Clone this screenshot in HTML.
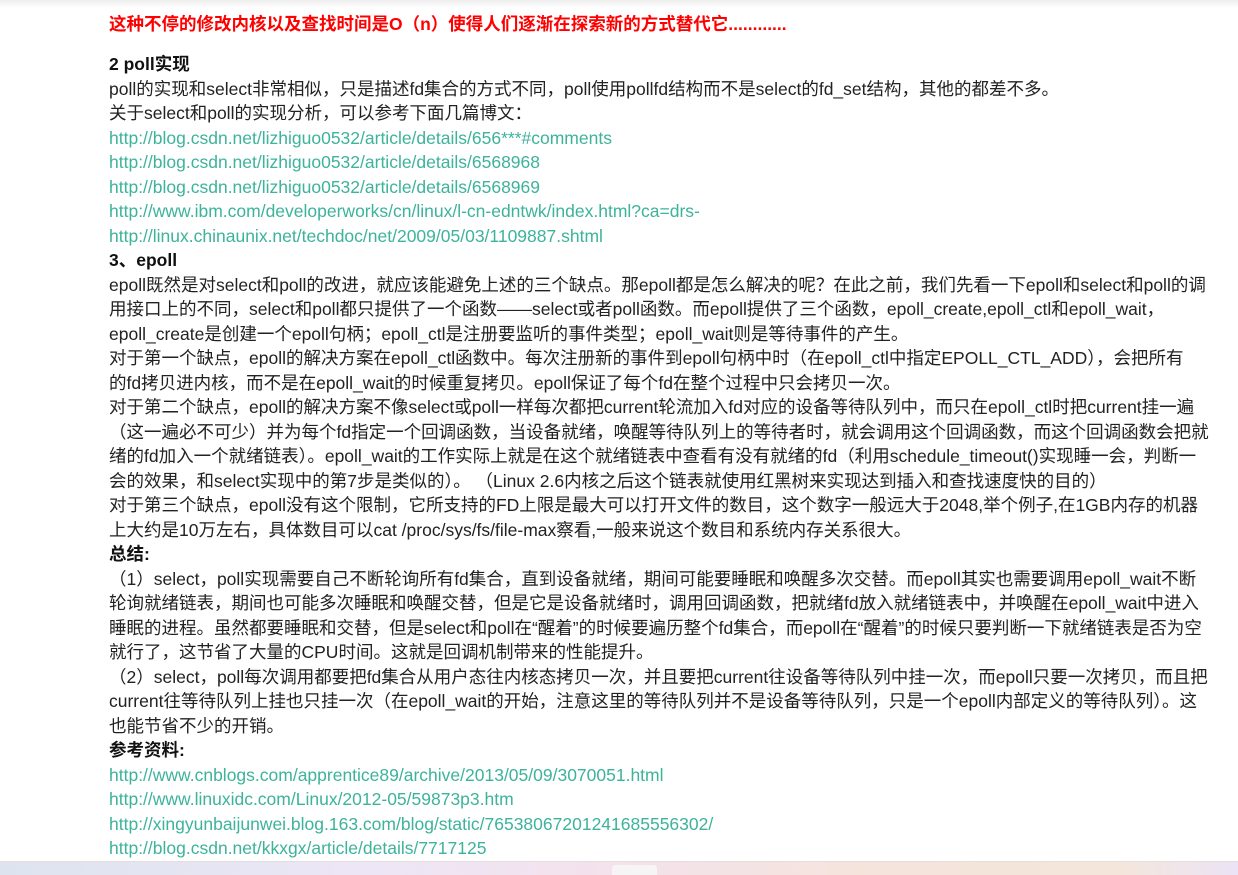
<!DOCTYPE html>
<html><head><meta charset="utf-8">
<style>
html,body{margin:0;padding:0;background:#fff;width:1238px;height:875px;overflow:hidden;}
body{font-family:"Liberation Sans","Noto Sans CJK SC",sans-serif;font-size:17.5px;color:#222;position:relative;}
.top{position:absolute;left:0;top:0;width:1238px;height:8px;background:linear-gradient(#eee,#fff);}
.red{position:absolute;left:109px;top:12px;color:#f00;font-weight:bold;line-height:24px;white-space:nowrap;}
.c{position:absolute;left:109px;top:52px;line-height:24.5px;white-space:nowrap;}
.c div{height:24.5px;}
b{font-weight:bold;color:#111;}
.l{color:#3db39b;}
.bar{position:absolute;left:0;top:861px;width:1238px;height:14px;border-top:1px solid #e6dcdc;background:linear-gradient(90deg,#dde4ef,#ede6f6 30%,#f4e2ec 50%,#f5e4dc 70%,#f4e6da 90%,#ece4f6);}
.tab{position:absolute;left:612px;top:3px;width:45px;height:12px;background:#f6f4f4;border-radius:3px 3px 0 0;}
</style></head><body>
<div class="top"></div>
<div class="red">这种不停的修改内核以及查找时间是O（n）使得人们逐渐在探索新的方式替代它............</div>
<div class="c">
<div><b>2 poll实现</b></div>
<div>poll的实现和select非常相似，只是描述fd集合的方式不同，poll使用pollfd结构而不是select的fd_set结构，其他的都差不多。</div>
<div>关于select和poll的实现分析，可以参考下面几篇博文：</div>
<div class="l">http://blog.csdn.net/lizhiguo0532/article/details/656***#comments</div>
<div class="l">http://blog.csdn.net/lizhiguo0532/article/details/6568968</div>
<div class="l">http://blog.csdn.net/lizhiguo0532/article/details/6568969</div>
<div class="l">http://www.ibm.com/developerworks/cn/linux/l-cn-edntwk/index.html?ca=drs-</div>
<div class="l">http://linux.chinaunix.net/techdoc/net/2009/05/03/1109887.shtml</div>
<div><b>3、epoll</b></div>
<div>epoll既然是对select和poll的改进，就应该能避免上述的三个缺点。那epoll都是怎么解决的呢？在此之前，我们先看一下epoll和select和poll的调</div>
<div>用接口上的不同，select和poll都只提供了一个函数——select或者poll函数。而epoll提供了三个函数，epoll_create,epoll_ctl和epoll_wait，</div>
<div>epoll_create是创建一个epoll句柄；epoll_ctl是注册要监听的事件类型；epoll_wait则是等待事件的产生。</div>
<div>对于第一个缺点，epoll的解决方案在epoll_ctl函数中。每次注册新的事件到epoll句柄中时（在epoll_ctl中指定EPOLL_CTL_ADD），会把所有</div>
<div>的fd拷贝进内核，而不是在epoll_wait的时候重复拷贝。epoll保证了每个fd在整个过程中只会拷贝一次。</div>
<div>对于第二个缺点，epoll的解决方案不像select或poll一样每次都把current轮流加入fd对应的设备等待队列中，而只在epoll_ctl时把current挂一遍</div>
<div>（这一遍必不可少）并为每个fd指定一个回调函数，当设备就绪，唤醒等待队列上的等待者时，就会调用这个回调函数，而这个回调函数会把就</div>
<div>绪的fd加入一个就绪链表）。epoll_wait的工作实际上就是在这个就绪链表中查看有没有就绪的fd（利用schedule_timeout()实现睡一会，判断一</div>
<div>会的效果，和select实现中的第7步是类似的）。 （Linux 2.6内核之后这个链表就使用红黑树来实现达到插入和查找速度快的目的）</div>
<div>对于第三个缺点，epoll没有这个限制，它所支持的FD上限是最大可以打开文件的数目，这个数字一般远大于2048,举个例子,在1GB内存的机器</div>
<div>上大约是10万左右，具体数目可以cat /proc/sys/fs/file-max察看,一般来说这个数目和系统内存关系很大。</div>
<div><b>总结:</b></div>
<div>（1）select，poll实现需要自己不断轮询所有fd集合，直到设备就绪，期间可能要睡眠和唤醒多次交替。而epoll其实也需要调用epoll_wait不断</div>
<div>轮询就绪链表，期间也可能多次睡眠和唤醒交替，但是它是设备就绪时，调用回调函数，把就绪fd放入就绪链表中，并唤醒在epoll_wait中进入</div>
<div>睡眠的进程。虽然都要睡眠和交替，但是select和poll在“醒着”的时候要遍历整个fd集合，而epoll在“醒着”的时候只要判断一下就绪链表是否为空</div>
<div>就行了，这节省了大量的CPU时间。这就是回调机制带来的性能提升。</div>
<div>（2）select，poll每次调用都要把fd集合从用户态往内核态拷贝一次，并且要把current往设备等待队列中挂一次，而epoll只要一次拷贝，而且把</div>
<div>current往等待队列上挂也只挂一次（在epoll_wait的开始，注意这里的等待队列并不是设备等待队列，只是一个epoll内部定义的等待队列）。这</div>
<div>也能节省不少的开销。</div>
<div><b>参考资料:</b></div>
<div class="l">http://www.cnblogs.com/apprentice89/archive/2013/05/09/3070051.html</div>
<div class="l">http://www.linuxidc.com/Linux/2012-05/59873p3.htm</div>
<div class="l">http://xingyunbaijunwei.blog.163.com/blog/static/76538067201241685556302/</div>
<div class="l">http://blog.csdn.net/kkxgx/article/details/7717125</div>
</div>
<div class="bar"><div class="tab"></div></div>
</body></html>
